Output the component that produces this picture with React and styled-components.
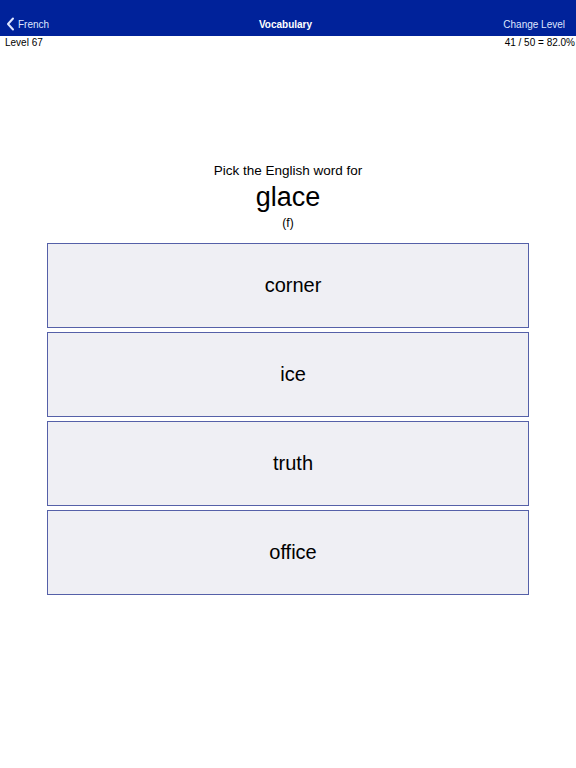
import React from 'react';
import styled, { createGlobalStyle } from 'styled-components';

const Global = createGlobalStyle`
  body {
    margin: 0;
    background: #ffffff;
    font-family: "Liberation Sans", Arial, sans-serif;
    color: #000;
  }
`;

const NavBar = styled.div`
  height: 36px;
  background: #00229a;
  display: grid;
  grid-template-columns: 1fr auto 1fr;
  align-items: center;
  padding: 12px 11px 0 6px;
  box-sizing: border-box;
`;

const Back = styled.div`
  display: flex;
  align-items: center;
  gap: 3px;
  color: #dfe6ff;
  font-size: 10px;
`;

const Title = styled.div`
  color: #ffffff;
  font-size: 10px;
  font-weight: bold;
`;

const Action = styled.div`
  justify-self: end;
  color: #dfe6ff;
  font-size: 10px;
`;

const StatusRow = styled.div`
  display: flex;
  justify-content: space-between;
  padding: 0 1px 0 5px;
  font-size: 10px;
  line-height: 13px;
`;

const Prompt = styled.div`
  margin-top: 113px;
  text-align: center;
`;

const Question = styled.div`
  font-size: 13.5px;
  line-height: 17px;
`;

const Word = styled.div`
  font-size: 27px;
  line-height: 36px;
`;

const Gender = styled.div`
  font-size: 12px;
  line-height: 16px;
`;

const Choices = styled.div`
  display: flex;
  flex-direction: column;
  gap: 4px;
  margin: 12px 47px 0 47px;
`;

const Choice = styled.div`
  height: 85px;
  box-sizing: border-box;
  border: 1px solid #5560a8;
  background: #efeff4;
  display: flex;
  align-items: center;
  justify-content: center;
  padding-left: 10px;
  font-size: 20px;
`;

const options = ['corner', 'ice', 'truth', 'office'];

export default function App() {
  return (
    <>
      <Global />
      <NavBar>
        <Back>
          <svg width="9" height="14" viewBox="0 0 9 14">
            <path d="M7 1.5 L2 7 L7 12.5" fill="none" stroke="#dfe6ff" strokeWidth="2" strokeLinecap="round" strokeLinejoin="round" />
          </svg>
          French
        </Back>
        <Title>Vocabulary</Title>
        <Action>Change Level</Action>
      </NavBar>
      <StatusRow>
        <span>Level 67</span>
        <span>41 / 50 = 82.0%</span>
      </StatusRow>
      <Prompt>
        <Question>Pick the English word for</Question>
        <Word>glace</Word>
        <Gender>(f)</Gender>
      </Prompt>
      <Choices>
        {options.map((o) => (
          <Choice key={o}>{o}</Choice>
        ))}
      </Choices>
    </>
  );
}
